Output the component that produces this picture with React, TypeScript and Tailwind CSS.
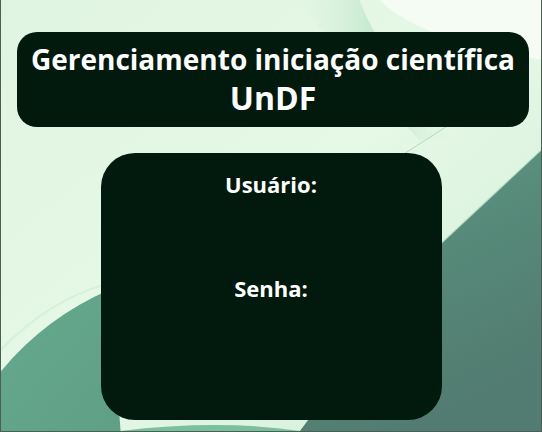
export default function App() {
  return (
    <main
      className="relative h-[432px] w-full overflow-hidden border-x border-b border-[#4d5e56]"
      style={{ fontFamily: '"Open Sans", "Noto Sans", sans-serif' }}
    >
      {/* decorative background drawing */}
      <svg
        className="absolute inset-0 h-full w-full"
        viewBox="0 0 542 432"
        preserveAspectRatio="none"
      >
        <defs>
          <linearGradient id="base" x1="0" y1="0" x2="1" y2="1">
            <stop offset="0" stopColor="#e0f5e1" />
            <stop offset="0.5" stopColor="#e6f8e6" />
            <stop offset="1" stopColor="#d0efd8" />
          </linearGradient>
          <linearGradient id="right" x1="0" y1="0" x2="0.4" y2="1">
            <stop offset="0" stopColor="#62a287" />
            <stop offset="0.45" stopColor="#578b7a" />
            <stop offset="1" stopColor="#527c71" />
          </linearGradient>
          <linearGradient id="left" x1="0" y1="0" x2="1" y2="1">
            <stop offset="0" stopColor="#66a98e" />
            <stop offset="1" stopColor="#5f9f86" />
          </linearGradient>
          <linearGradient id="streak" x1="0" y1="0" x2="1" y2="0">
            <stop offset="0" stopColor="#cfeed8" stopOpacity="0" />
            <stop offset="0.5" stopColor="#b5e2c4" />
            <stop offset="1" stopColor="#f4fbf3" stopOpacity="0" />
          </linearGradient>
        </defs>
        <rect width="542" height="432" fill="url(#base)" />
        <path d="M300,0 Q340,60 420,140 L470,140 Q380,60 360,0 Z" fill="url(#streak)" opacity="0.8" />
        <path d="M380,0 Q420,40 542,60 L542,0 Z" fill="#f5fcf4" />
        <path d="M542,150 L440,245 L300,432 L542,432 Z" fill="url(#right)" />
        <path d="M542,150 L440,245" stroke="#d8f3de" strokeWidth="2" opacity="0.7" />
        <path d="M380,170 L450,125" stroke="#9fd6b3" strokeWidth="1" opacity="0.8" />
        <path d="M0,372 Q45,318 110,290 L120,432 L0,432 Z" fill="url(#left)" />
        <path d="M0,350 Q50,300 105,285" stroke="#c8ecd2" strokeWidth="2" fill="none" opacity="0.6" />
        <path d="M120,432 Q220,420 300,432 Z" fill="#7cbf9c" />
      </svg>

      <div className="relative flex flex-col items-center pt-8">
        <div className="ml-[4px] flex w-[512px] flex-col items-center rounded-[20px] bg-[#02190d] pt-[8px] pb-[9px] text-white">
          <h1 className="text-[28px] leading-[38px] font-bold">
            Gerenciamento iniciação científica
          </h1>
          <h2 className="text-[32px] leading-[40px] font-bold">UnDF</h2>
        </div>

        <div className="mt-[26px] flex h-[267px] w-[341px] flex-col items-center rounded-[34px] bg-[#02190d] pt-[16px] text-white">
          <label className="text-[22px] leading-[30px] font-bold">Usuário:</label>
          <label className="mt-[74px] text-[22px] leading-[30px] font-bold">
            Senha:
          </label>
        </div>
      </div>
    </main>
  )
}
